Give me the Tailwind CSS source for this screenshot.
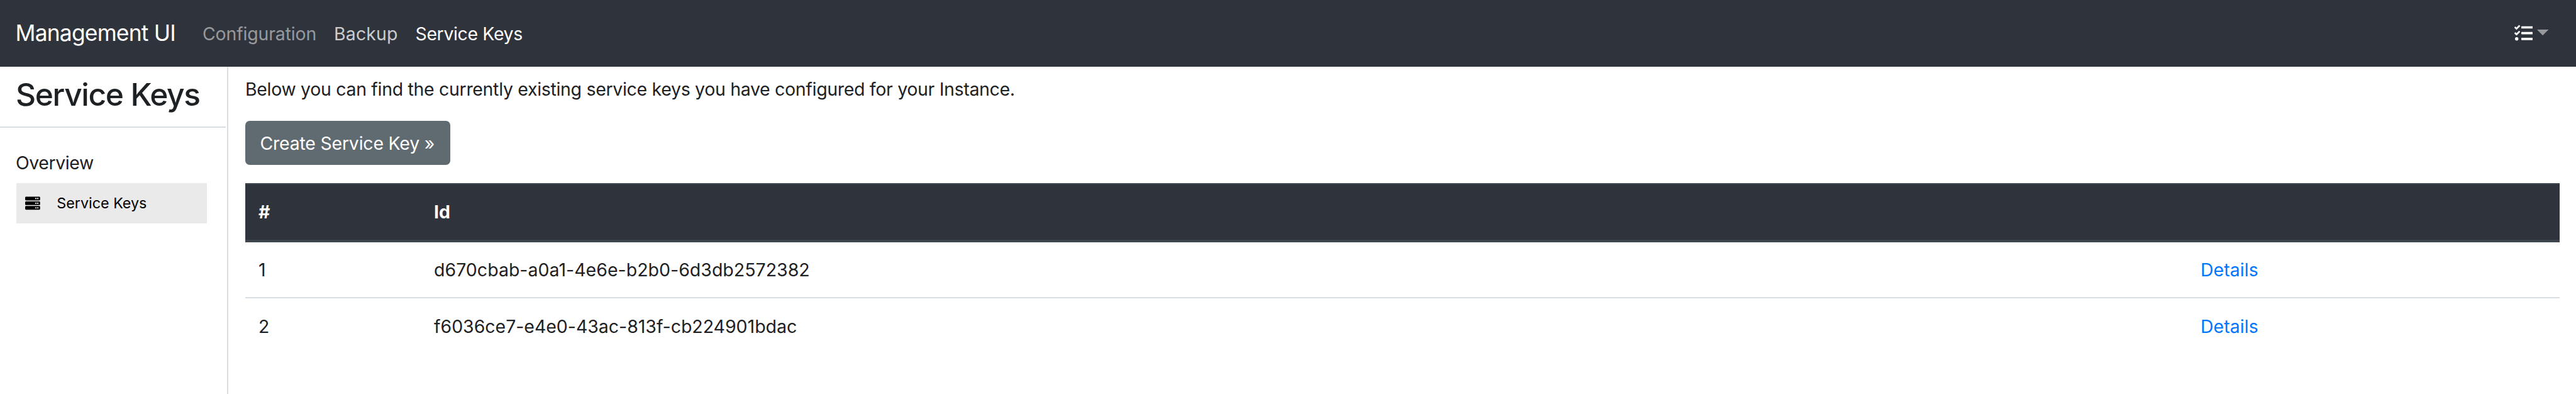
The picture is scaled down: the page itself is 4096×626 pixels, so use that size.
<!DOCTYPE html>
<html lang="en">
<head>
<meta charset="utf-8">
<title>Management UI</title>
<script src="https://cdn.jsdelivr.net/npm/@tailwindcss/browser@4"></script>
</head>
<body class="flex h-[626px] w-[4096px] flex-col overflow-hidden bg-white font-['Inter','Liberation_Sans',sans-serif] text-[28.4px] text-[#1d2124]">
<nav class="flex h-[106px] shrink-0 items-center justify-between bg-[#2f333b] pr-[44px] pl-[24.5px] text-white">
  <div class="flex items-center whitespace-nowrap">
    <a class="w-[297.5px] text-[35.4px] leading-[106px] tracking-[-0.8px]">Management UI</a>
    <a class="w-[209px] pt-px leading-[106px] tracking-[-0.12px] text-white/50">Configuration</a>
    <a class="w-[129.5px] pt-px leading-[106px] tracking-[0.2px] text-white/75">Backup</a>
    <a class="pt-px leading-[106px] tracking-[-0.34px]">Service Keys</a>
  </div>
  <div class="flex items-center">
    <svg class="size-[29.3px]" viewBox="0 0 512 512" fill="currentColor"><path d="M139.61 35.5a12 12 0 0 0-17 0L58.93 98.81l-22.7-22.12a12 12 0 0 0-17 0L3.53 92.41a12 12 0 0 0 0 17l47.59 47.4a12.78 12.78 0 0 0 17.61 0l15.59-15.62L156.52 69a12.09 12.09 0 0 0 .09-17zm0 159.19a12 12 0 0 0-17 0l-63.68 63.72-22.7-22.1a12 12 0 0 0-17 0L3.53 252a12 12 0 0 0 0 17L51 316.5a12.77 12.77 0 0 0 17.6 0l15.7-15.69 72.2-72.22a12 12 0 0 0 .09-16.9zM64 368c-26.49 0-48.59 21.5-48.59 48S37.53 464 64 464a48 48 0 0 0 0-96zm432 16H208a16 16 0 0 0-16 16v32a16 16 0 0 0 16 16h288a16 16 0 0 0 16-16v-32a16 16 0 0 0-16-16zm0-320H208a16 16 0 0 0-16 16v32a16 16 0 0 0 16 16h288a16 16 0 0 0 16-16V80a16 16 0 0 0-16-16zm0 160H208a16 16 0 0 0-16 16v32a16 16 0 0 0 16 16h288a16 16 0 0 0 16-16v-32a16 16 0 0 0-16-16z"/></svg>
    <svg class="mt-[-2px] ml-[6.5px] h-[9.2px] w-[18.3px] text-white/50" viewBox="0 0 20 10" fill="currentColor"><path d="M0 0h20L10 10z"/></svg>
  </div>
</nav>
<div class="flex grow">
  <aside class="flex w-[363px] shrink-0 flex-col border-r-2 border-[#d9dee2]">
    <div class="mr-[2px] h-[97px] border-b-2 border-[#d9dee2] pl-[25px]">
      <h1 class="text-[49.7px] leading-[88px] font-medium tracking-[-1.38px] whitespace-nowrap">Service Keys</h1>
    </div>
    <div class="pt-[36px] pl-[25px] leading-[40px] tracking-[-0.38px]">Overview</div>
    <a class="mt-[12px] ml-[26px] flex h-[64px] w-[303px] items-center bg-[#eaeaea] pl-[14px] text-[23.3px] text-black">
      <svg class="size-[23.8px]" viewBox="0 0 512 512" fill="currentColor"><path d="M480 160H32c-17.673 0-32-14.327-32-32V64c0-17.673 14.327-32 32-32h448c17.673 0 32 14.327 32 32v64c0 17.673-14.327 32-32 32zm-48-88c-13.255 0-24 10.745-24 24s10.745 24 24 24 24-10.745 24-24-10.745-24-24-24zm-64 0c-13.255 0-24 10.745-24 24s10.745 24 24 24 24-10.745 24-24-10.745-24-24-24zm112 248H32c-17.673 0-32-14.327-32-32v-64c0-17.673 14.327-32 32-32h448c17.673 0 32 14.327 32 32v64c0 17.673-14.327 32-32 32zm-48-88c-13.255 0-24 10.745-24 24s10.745 24 24 24 24-10.745 24-24-10.745-24-24-24zm-64 0c-13.255 0-24 10.745-24 24s10.745 24 24 24 24-10.745 24-24-10.745-24-24-24zm112 248H32c-17.673 0-32-14.327-32-32v-64c0-17.673 14.327-32 32-32h448c17.673 0 32 14.327 32 32v64c0 17.673-14.327 32-32 32zm-48-88c-13.255 0-24 10.745-24 24s10.745 24 24 24 24-10.745 24-24-10.745-24-24-24zm-64 0c-13.255 0-24 10.745-24 24s10.745 24 24 24 24-10.745 24-24-10.745-24-24-24z"/></svg>
      <span class="ml-[26.5px]">Service Keys</span>
    </a>
  </aside>
  <main class="flex w-[3707px] flex-col items-start pt-[14px] pl-[27px]">
    <p class="leading-[43px] tracking-[-0.27px]">Below you can find the currently existing service keys you have configured for your Instance.</p>
    <button class="mt-[29px] h-[70px] w-[326px] rounded-[7px] bg-[#606b71] pt-[2px] pl-[23.5px] text-left tracking-[-0.18px] whitespace-nowrap text-white">Create Service Key »</button>
    <div class="mt-[29px] w-full">
      <div class="grid h-[94px] grid-cols-[279px_2809px_1fr] items-center border-t-2 border-b-4 border-[#3c444c] bg-[#2f333b] pt-px pl-[21px] font-bold text-white"><span>#</span><span>Id</span></div>
      <div class="grid h-[89px] grid-cols-[279px_2809px_1fr] items-center border-b-2 border-[#d9dee2] pt-px pl-[21px]"><span>1</span><span class="tracking-[0.08px]">d670cbab-a0a1-4e6e-b2b0-6d3db2572382</span><a class="tracking-[0.08px] text-[#0076ff]">Details</a></div>
      <div class="grid h-[89px] grid-cols-[279px_2809px_1fr] items-center pt-px pl-[21px]"><span>2</span><span class="tracking-[0.03px]">f6036ce7-e4e0-43ac-813f-cb224901bdac</span><a class="tracking-[0.08px] text-[#0076ff]">Details</a></div>
    </div>
  </main>
</div>
</body>
</html>
